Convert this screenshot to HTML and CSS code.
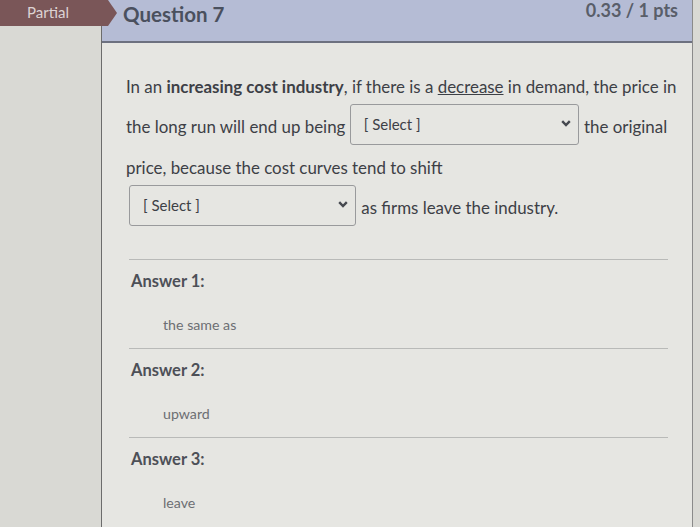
FILE: index.html
```html
<!DOCTYPE html>
<html lang="en">
<head>
  <meta charset="UTF-8" />
  <title>Question 7</title>
  <link rel="stylesheet" href="styles.css">
</head>
<body>
  <div class="page">
    <div class="gutter">
      <div class="badge">Partial</div>
    </div>

    <div class="question">
      <div class="q-header">
        <h2>Question 7</h2>
        <span class="pts">0.33 / 1 pts</span>
      </div>

      <div class="q-text">
        In an <b>increasing cost industry</b>, if there is a <u>decrease</u> in demand, the price in
        the long run will end up being
        <span class="select first">[ Select ]<span class="chev"><svg width="10" height="7" viewBox="0 0 10 7"><path d="M1.2 1.2 L5 5 L8.8 1.2" fill="none" stroke="#45484f" stroke-width="2.4"/></svg></span></span>
        the original price, because the cost curves tend to shift<br>
        <span class="select second">[ Select ]<span class="chev"><svg width="10" height="7" viewBox="0 0 10 7"><path d="M1.2 1.2 L5 5 L8.8 1.2" fill="none" stroke="#45484f" stroke-width="2.4"/></svg></span></span>
        as firms leave the industry.
      </div>

      <div class="answers">
        <div class="answer">
          <div class="a-label">Answer 1:</div>
          <div class="a-value">the same as</div>
        </div>
        <div class="answer">
          <div class="a-label">Answer 2:</div>
          <div class="a-value">upward</div>
        </div>
        <div class="answer">
          <div class="a-label">Answer 3:</div>
          <div class="a-value">leave</div>
        </div>
      </div>
    </div>

    <div class="gutter-right"></div>
  </div>
</body>
</html>
```

FILE: styles.css
```css
:root {
  --side-bg: #d9d9d4;
  --panel-bg: #e6e6e2;
  --header-bg: #b5bcd5;
  --badge: #7a5658;
  --text: #3d4046;
  --muted: #6c6e72;
  --rule: #b9bab8;
}
body {
  margin: 0;
  font-family: Lato, 'Open Sans', sans-serif;
  background: var(--side-bg);
  color: var(--text);
  overflow: hidden;
}
.page {
  display: flex;
  height: 527px;
}
.gutter {
  width: 101px;
  flex-shrink: 0;
  position: relative;
}
.badge {
  position: absolute;
  top: 0;
  left: 0;
  width: 90px;
  height: 26px;
  padding-left: 27px;
  background: var(--badge);
  color: #ddd3d3;
  font-size: 15px;
  line-height: 24px;
  clip-path: polygon(0 0, 108px 0, 117px 13px, 108px 26px, 0 26px);
  z-index: 2;
}
.question {
  width: 590px;
  flex-shrink: 0;
  background: var(--panel-bg);
  border-left: 1px solid #6c6c6c;
  border-right: 1px solid #8a8a8a;
}
.q-header {
  height: 41px;
  background: var(--header-bg);
  border-bottom: 2px solid #6d7180;
  display: flex;
  align-items: center;
  justify-content: space-between;
  padding: 0 14px 0 21px;
}
.q-header h2 {
  margin: -13px 0 0;
  font-size: 20.5px;
  font-weight: bold;
  color: #4a505e;
}
.pts {
  font-size: 18px;
  font-weight: bold;
  color: #595e69;
  margin-top: -21px;
}
.q-text {
  padding: 24px 12px 0 24px;
  font-size: 16.9px;
  line-height: 40px;
}
.select {
  display: inline-block;
  vertical-align: middle;
  position: relative;
  top: -5px;
  height: 41px;
  margin-bottom: -2px;
  box-sizing: border-box;
  border: 1px solid #999a9c;
  border-radius: 3px;
  padding-left: 13px;
  font-size: 15px;
  line-height: 38px;
}
.select.first {
  width: 229px;
  margin-left: 0;
  margin-right: 1px;
}
.select.second {
  width: 227px;
  margin-left: 3px;
  margin-right: 1px;
}
.chev {
  position: absolute;
  right: 7px;
  top: 15px;
  line-height: 0;
}
.answers {
  margin: 30px 24px 0 27px;
}
.answer {
  border-top: 1px solid var(--rule);
  padding: 10px 0 13px 2px;
}
.a-label {
  font-size: 16.5px;
  font-weight: bold;
  color: #4d5057;
  line-height: 22px;
}
.a-value {
  margin: 23px 0 0 32px;
  font-size: 14.2px;
  line-height: 20px;
  color: var(--muted);
}
.gutter-right {
  flex: 1;
}
```
